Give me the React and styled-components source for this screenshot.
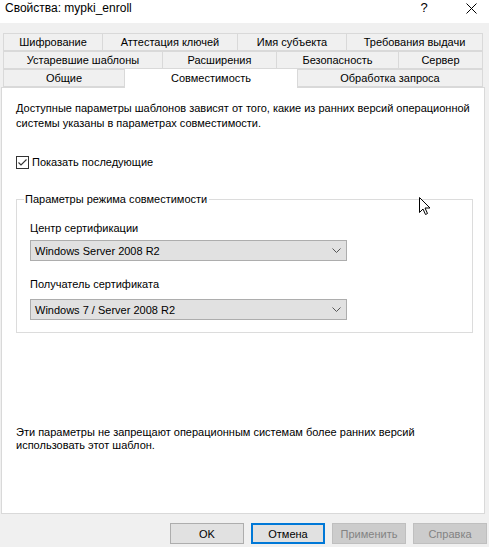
import React from "react";
import styled, { createGlobalStyle } from "styled-components";

const Global = createGlobalStyle`
  html, body {
    margin: 0;
    padding: 0;
    background: #f0f0f0;
  }
  body {
    font-family: "Liberation Sans", Arial, sans-serif;
    font-size: 11px;
    color: #000;
  }
`;

const Window = styled.div`
  position: relative;
  width: 489px;
  height: 547px;
  background: #f0f0f0;
  display: flex;
  flex-direction: column;
  overflow: hidden;
`;

const TitleBar = styled.div`
  height: 23px;
  background: #fff;
  display: flex;
  align-items: flex-start;
  padding-left: 5px;
  box-sizing: border-box;
`;

const Title = styled.div`
  font-size: 12px;
  line-height: 16px;
  flex: 1;
`;

const TitleButton = styled.div`
  width: ${(p) => p.$w}px;
  height: 16px;
  display: flex;
  align-items: center;
  justify-content: center;
  font-size: 13px;
  line-height: 16px;
`;

const Tabs = styled.div`
  margin: 10px 6px 0 3px;
  display: flex;
  flex-direction: column;
`;

const TabRow = styled.div`
  display: flex;
  height: 18px;
  align-items: flex-end;
  position: relative;
  z-index: ${(p) => (p.$front ? 2 : 1)};
`;

const Tab = styled.div`
  width: ${(p) => p.$w}px;
  height: ${(p) => (p.$active ? 20 : 18)}px;
  box-sizing: border-box;
  border: 1px solid #d9d9d9;
  border-bottom: ${(p) => (p.$active ? "none" : "1px solid #d9d9d9")};
  margin-left: -1px;
  margin-bottom: ${(p) => (p.$active ? -1 : 0)}px;
  background: ${(p) => (p.$active ? "#fff" : "#f0f0f0")};
  display: flex;
  align-items: ${(p) => (p.$active ? "flex-start" : "center")};
  padding-top: ${(p) => (p.$active ? 3 : 0)}px;
  justify-content: center;
  white-space: nowrap;
  &:first-child {
    margin-left: 0;
  }
`;

const Panel = styled.div`
  margin: 0 4px 0 1px;
  height: 427px;
  box-sizing: border-box;
  background: #fff;
  border: 1px solid #d9d9d9;
  display: flex;
  flex-direction: column;
  padding: 13px 11px 0 14px;
`;

const Text = styled.div`
  line-height: 15px;
`;

const CheckRow = styled.label`
  margin-top: 24px;
  display: flex;
  align-items: center;
  height: 14px;
  gap: 3px;
`;

const CheckBox = styled.span`
  width: 13px;
  height: 13px;
  box-sizing: border-box;
  border: 1px solid #333;
  background: #fff;
  display: flex;
  align-items: center;
  justify-content: center;
`;

const Group = styled.div`
  margin-top: 30px;
  height: 134px;
  box-sizing: border-box;
  border: 1px solid #dcdcdc;
  padding: 0 0 0 13px;
`;

const Legend = styled.div`
  margin: -8px 0 0 -6px;
  width: fit-content;
  padding: 0 2px 0 1px;
  background: #fff;
  line-height: 15px;
`;

const FieldLabel = styled.div`
  margin-top: ${(p) => p.$mt}px;
  line-height: 15px;
`;

const Combo = styled.div`
  margin-top: ${(p) => p.$mt}px;
  width: 317px;
  height: 21px;
  box-sizing: border-box;
  background: #e1e1e1;
  border: 1px solid #adadad;
  display: flex;
  align-items: center;
  padding: 0 5px 0 4px;
`;

const ComboText = styled.span`
  flex: 1;
`;

const Note = styled.div`
  margin-top: auto;
  margin-bottom: 61px;
  line-height: 13px;
`;

const Footer = styled.div`
  display: flex;
  justify-content: flex-end;
  gap: 7px;
  padding: 9px 2px 0 0;
`;

const Button = styled.div`
  width: 74px;
  height: 21px;
  box-sizing: border-box;
  display: flex;
  align-items: center;
  justify-content: center;
  background: ${(p) => (p.$disabled ? "#cccccc" : "#e1e1e1")};
  border: ${(p) =>
    p.$focused ? "2px solid #0078d7" : p.$disabled ? "1px solid #bfbfbf" : "1px solid #adadad"};
  color: ${(p) => (p.$disabled ? "#838383" : "#000")};
`;

const Cursor = styled.svg`
  position: absolute;
  left: 419px;
  top: 197px;
`;

const Chevron = () => (
  <svg width="9" height="5" viewBox="0 0 9 5">
    <path d="M0.5 0.5 L4.5 4.5 L8.5 0.5" fill="none" stroke="#555" strokeWidth="1" />
  </svg>
);

const rows = [
  [
    ["Шифрование", 100],
    ["Аттестация ключей", 136],
    ["Имя субъекта", 110],
    ["Требования выдачи", 137],
  ],
  [
    ["Устаревшие шаблоны", 160],
    ["Расширения", 115],
    ["Безопасность", 123],
    ["Сервер", 85],
  ],
  [
    ["Общие", 122],
    ["Совместимость", 174, true],
    ["Обработка запроса", 186],
  ],
];

export default function App() {
  return (
    <Window>
      <Global />
      <TitleBar>
        <Title>Свойства: mypki_enroll</Title>
        <TitleButton $w={16}>?</TitleButton>
        <TitleButton $w={30} style={{ marginLeft: 24, marginRight: 3 }}>
          <svg width="11" height="11" viewBox="0 0 11 11">
            <path d="M0.5 0.5 L10.5 10.5 M10.5 0.5 L0.5 10.5" stroke="#000" strokeWidth="1" />
          </svg>
        </TitleButton>
      </TitleBar>

      <Tabs>
        {rows.map((row, i) => (
          <TabRow key={i} $front={i === 2}>
            {row.map(([label, w, active]) => (
              <Tab key={label} $w={w} $active={active}>
                {label}
              </Tab>
            ))}
          </TabRow>
        ))}
      </Tabs>

      <Panel>
        <Text>
          Доступные параметры шаблонов зависят от того, какие из ранних версий операционной
          <br />
          системы указаны в параметрах совместимости.
        </Text>

        <CheckRow>
          <CheckBox>
            <svg width="11" height="11" viewBox="0 0 11 11">
              <path d="M1.5 5.5 L4 8 L9.5 2.5" fill="none" stroke="#333" strokeWidth="1.1" />
            </svg>
          </CheckBox>
          Показать последующие
        </CheckRow>

        <Group>
          <Legend>Параметры режима совместимости</Legend>
          <FieldLabel $mt={14}>Центр сертификации</FieldLabel>
          <Combo $mt={4}>
            <ComboText>Windows Server 2008 R2</ComboText>
            <Chevron />
          </Combo>
          <FieldLabel $mt={16}>Получатель сертификата</FieldLabel>
          <Combo $mt={7}>
            <ComboText>Windows 7 / Server 2008 R2</ComboText>
            <Chevron />
          </Combo>
        </Group>

        <Note>
          Эти параметры не запрещают операционным системам более ранних версий
          <br />
          использовать этот шаблон.
        </Note>
      </Panel>

      <Footer>
        <Button>OK</Button>
        <Button $focused>Отмена</Button>
        <Button $disabled>Применить</Button>
        <Button $disabled>Справка</Button>
      </Footer>

      <Cursor width="13" height="20" viewBox="0 0 13 20">
        <path
          d="M0.5 0.5 L0.5 15.5 L4 12 L6.5 17.5 L8.5 16.5 L6 11 L11 11 Z"
          fill="#fff"
          stroke="#000"
          strokeWidth="1"
          strokeLinejoin="miter"
        />
      </Cursor>
    </Window>
  );
}
